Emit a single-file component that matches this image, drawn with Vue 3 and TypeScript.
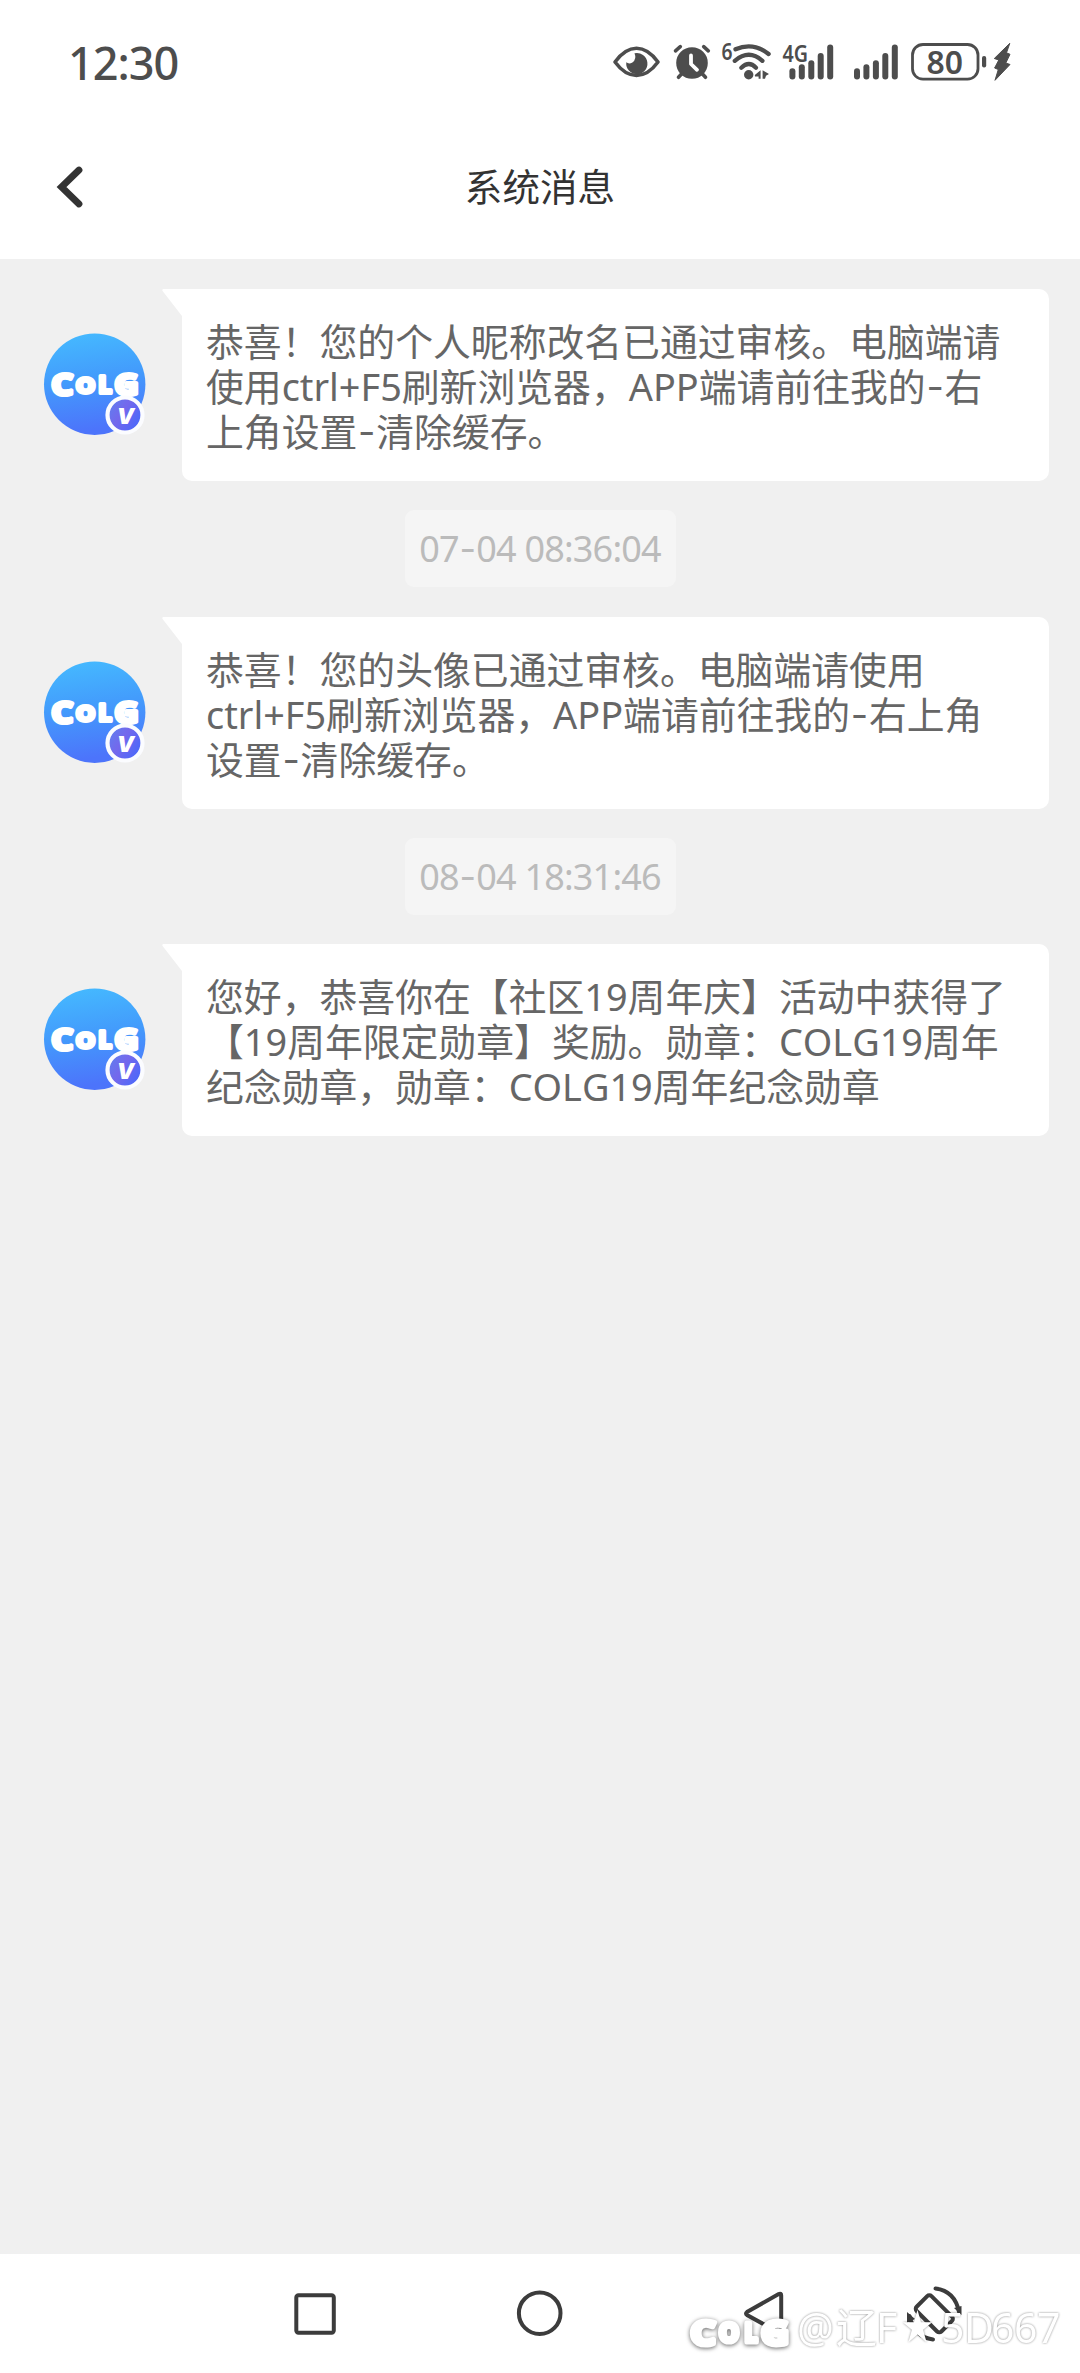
<script setup lang="ts">
interface Segment {
  text: string
  kind: 'cjk' | 'latin' | 'dash'
}
interface Message {
  lines: string[]
  time?: string
}

const messages: Message[] = [
  {
    lines: [
      '恭喜！您的个人昵称改名已通过审核。电脑端请',
      '使用ctrl+F5刷新浏览器，APP端请前往我的-右',
      '上角设置-清除缓存。',
    ],
    time: '07-04 08:36:04',
  },
  {
    lines: [
      '恭喜！您的头像已通过审核。电脑端请使用',
      'ctrl+F5刷新浏览器，APP端请前往我的-右上角',
      '设置-清除缓存。',
    ],
    time: '08-04 18:31:46',
  },
  {
    lines: [
      '您好，恭喜你在【社区19周年庆】活动中获得了',
      '【19周年限定勋章】奖励。勋章：COLG19周年',
      '纪念勋章，勋章：COLG19周年纪念勋章',
    ],
  },
]

function split(line: string): Segment[] {
  const parts = line.match(/-|[\x20-\x2c\x2e-\x7e]+|[^\x20-\x7e]+/g) ?? []
  return parts.map((text) => ({
    text,
    kind: text === '-' ? 'dash' : /^[\x20-\x7e]/.test(text) ? 'latin' : 'cjk',
  }))
}

const bars = [
  { dx: 0, top: 68.3 },
  { dx: 9.4, top: 64.3 },
  { dx: 18.9, top: 60.3 },
  { dx: 28.3, top: 53 },
  { dx: 37.8, top: 44.4 },
]

const mark = [
  { ch: '@', x: 797 },
  { ch: '辽', x: 836 },
  { ch: 'F', x: 876 },
  { ch: '5', x: 941 },
  { ch: 'D', x: 964 },
  { ch: '6', x: 991 },
  { ch: '6', x: 1014 },
  { ch: '7', x: 1037 },
]
</script>

<template>
  <div class="screen">
    <header class="status">
      <span class="clock">12:30</span>
      <div class="status-icons">
        <svg width="55" height="52" viewBox="610 36 55 52">
          <path d="M615 62C622 52.5 629 48.3 636.5 48.3S651 52.5 658 62C651 71.500 644 75.400 636.500 75.400S622 71.500 615 62Z" fill="none" stroke="#4d4d4d" stroke-width="3.6" stroke-linejoin="round" />
          <path d="M634.500 53.200A10.600 10.600 0 1 1 626.300 62.300Q629 64.400 632.400 62.400Q637 59 634.500 53.200Z" fill="#4d4d4d" />
        </svg>
        <svg width="51" height="52" viewBox="665 36 51 52">
          <circle cx="692" cy="63" r="15.800" fill="#4d4d4d" />
          <path d="M675.500 50.800L680.300 46.700M703.700 46.700L708.300 50.800M682 73.500L678.500 77.300M702 73.500L705.500 77.300" stroke="#4d4d4d" stroke-width="3.600" stroke-linecap="round" />
          <path d="M691 55.500V64L697 69.800" fill="none" stroke="#fff" stroke-width="3.800" stroke-linecap="round" stroke-linejoin="round" />
        </svg>
        <svg width="62" height="52" viewBox="716 36 62 52">
          <text x="721.500" y="60" class="glyph" font-size="23" textLength="11" lengthAdjust="spacingAndGlyphs">6</text>
          <g fill="none" stroke="#4d4d4d" stroke-width="4.300" stroke-linecap="round">
            <path d="M735.500 49.300Q753 41.500 768.600 54" />
            <path d="M734.800 60.800Q749 48.800 762.400 60.800" />
            <path d="M741.300 67.700Q749 60.400 756 67.700" />
          </g>
          <circle cx="748.700" cy="74.700" r="4.700" fill="#4d4d4d" />
          <path d="M754.800 75L760.600 70.200V78.800H758.600V76.400H755ZM762.600 70.200L769 74L766 75.800L765 78.800H762.600Z" fill="#4d4d4d" />
        </svg>
        <svg width="67" height="52" viewBox="778 36 67 52">
          <rect v-for="b in bars" :key="b.dx" :x="789.4 + b.dx" :y="b.top" width="6" :height="79.4 - b.top" rx="3" fill="#4d4d4d" />
          <text x="782.500" y="61.500" class="glyph halo" font-size="23" textLength="25.500" lengthAdjust="spacingAndGlyphs">4G</text>
        </svg>
        <svg width="60" height="52" viewBox="845 36 60 52">
          <rect v-for="b in bars" :key="b.dx" :x="854 + b.dx" :y="b.top" width="6" :height="79.4 - b.top" rx="3" fill="#4d4d4d" />
        </svg>
        <svg width="85" height="52" viewBox="905 36 85 52">
          <rect x="912.500" y="44.500" width="65.500" height="34.700" rx="10.500" fill="none" stroke="#4d4d4d" stroke-width="2.800" />
          <rect x="982" y="56" width="4.200" height="11.500" rx="2" fill="#4d4d4d" />
          <text x="926.500" y="73.700" class="glyph" font-size="32.500" textLength="36.500" lengthAdjust="spacingAndGlyphs">80</text>
        </svg>
        <svg width="24" height="52" viewBox="990 36 24 52">
          <path d="M1009.800 43.300L994.300 58.500L998.800 60L994.600 68L998.300 69.500L995 80.300L1010 64.500L1005.800 63L1010 54.300L1006.500 52.800Z" fill="#4d4d4d" stroke="#4d4d4d" stroke-width="1" stroke-linejoin="round" />
        </svg>
      </div>
    </header>

    <div class="titlebar">
      <svg class="back" width="40" height="56" viewBox="50 159 40 56">
        <path d="M79 170L61.500 187L79 204" fill="none" stroke="#333" stroke-width="6.800" stroke-linecap="round" />
      </svg>
      <h1>系统消息</h1>
    </div>

    <main class="chat">
      <template v-for="(m, i) in messages" :key="i">
        <section class="row">
          <svg class="avatar" width="112" height="112" viewBox="40 330 112 112">
            <defs>
              <linearGradient :id="'disc' + i" x1="0" y1="0" x2="0.150" y2="1">
                <stop offset="0" stop-color="#45bcff" />
                <stop offset="0.500" stop-color="#439bfc" />
                <stop offset="1" stop-color="#4c74fb" />
              </linearGradient>
              <linearGradient :id="'vip' + i" x1="0" y1="0" x2="1" y2="0.600">
                <stop offset="0" stop-color="#5b83f0" />
                <stop offset="0.500" stop-color="#7468ec" />
                <stop offset="1" stop-color="#4b68fa" />
              </linearGradient>
            </defs>
            <circle cx="94.700" cy="384.200" r="50.700" :fill="'url(#disc' + i + ')'" />
            <g class="logo">
              <text x="51.500" y="395" font-size="29" textLength="21.500" lengthAdjust="spacingAndGlyphs">C</text>
              <text x="76" y="392.500" font-size="22" textLength="19" lengthAdjust="spacingAndGlyphs">O</text>
              <text x="98.500" y="392.500" font-size="23" textLength="13" lengthAdjust="spacingAndGlyphs">L</text>
              <text x="114.500" y="395" font-size="29" textLength="24" lengthAdjust="spacingAndGlyphs">G</text>
            </g>
            <circle cx="125" cy="415" r="17.500" :fill="'url(#vip' + i + ')'" stroke="#fbfcff" stroke-width="4.200" />
            <text class="vip" x="125.500" y="424" font-size="22" text-anchor="middle">V</text>
          </svg>
          <div class="bubble">
            <svg class="tail" width="22" height="30" viewBox="0 0 22 30">
              <path d="M1.500 0H22V30L20 27L0.600 2Q-0.200 0 1.500 0Z" fill="#fff" />
            </svg>
            <p v-for="line in m.lines" :key="line">
              <span v-for="(s, k) in split(line)" :key="k" :class="s.kind">{{ s.text }}</span>
            </p>
          </div>
        </section>
        <div v-if="m.time" class="time">
          <span v-for="(s, k) in split(m.time)" :key="k" :class="s.kind">{{ s.text }}</span>
        </div>
      </template>
    </main>

    <nav class="navbar">
      <svg width="60" height="60" viewBox="285 2284 60 60">
        <rect x="296.300" y="2295.200" width="37.500" height="37.500" rx="2.200" fill="none" stroke="#3c3c3c" stroke-width="4" />
      </svg>
      <svg width="60" height="60" viewBox="510 2284 60 60">
        <circle cx="539.700" cy="2313.200" r="20.800" fill="none" stroke="#3c3c3c" stroke-width="4" />
      </svg>
      <svg width="60" height="60" viewBox="735 2284 60 60">
        <path d="M781.200 2295.500V2331Q781.200 2334 778.700 2332.500L747 2315Q745 2313.500 747 2312L778.700 2294Q781.200 2292.800 781.200 2295.500Z" fill="none" stroke="#3c3c3c" stroke-width="4" />
      </svg>
      <svg class="rotate" width="60" height="60" viewBox="905 2284 60 60">
        <rect x="-10.500" y="-17.500" width="21" height="35" rx="3" transform="translate(934.300 2313.800) rotate(-45)" fill="none" stroke="#3c3c3c" stroke-width="4" />
        <path d="M935.500 2288.500Q955 2291 959 2312M933 2339.500Q914 2337 909.500 2316" fill="none" stroke="#3c3c3c" stroke-width="4" stroke-linecap="round" />
        <path d="M954 2308L961.500 2306V2315ZM907 2312V2323L915 2319Z" fill="#3c3c3c" />
      </svg>
      <svg class="mark" width="400" height="60" viewBox="680 2300 400 60">
        <g class="mark-logo">
          <text x="690.500" y="2345" font-size="34" textLength="25" lengthAdjust="spacingAndGlyphs">C</text>
          <text x="719" y="2341.500" font-size="26" textLength="20" lengthAdjust="spacingAndGlyphs">O</text>
          <text x="744.500" y="2341.500" font-size="27" textLength="13" lengthAdjust="spacingAndGlyphs">L</text>
          <text x="761" y="2345" font-size="34" textLength="28" lengthAdjust="spacingAndGlyphs">G</text>
        </g>
        <g class="mark-name">
          <text v-for="g in mark" :key="g.x" :x="g.x" y="2342.800">{{ g.ch }}</text>
          <text x="902" y="2340" font-size="36" textLength="31" lengthAdjust="spacingAndGlyphs">★</text>
        </g>
      </svg>
    </nav>
  </div>
</template>

<style>
body {
  background: #fff;
}
</style>

<style scoped>
.screen {
  width: 1080px;
  height: 2373px;
  display: flex;
  flex-direction: column;
  background: #fff;
  overflow: hidden;
  font-family: 'Noto Sans', 'Noto Sans CJK SC', sans-serif;
}
svg {
  display: block;
  flex: none;
}
.status {
  height: 124px;
  box-sizing: border-box;
  padding: 36px 66px 0 68px;
  display: flex;
  justify-content: space-between;
  flex: none;
}
.clock {
  font-size: 45px;
  line-height: 54px;
  font-weight: 500;
  letter-spacing: -1px;
  color: #4d4d4d;
}
.status-icons {
  display: flex;
}
.glyph {
  font-family: 'Noto Sans', sans-serif;
  font-weight: 600;
  fill: #4d4d4d;
}
.halo {
  stroke: #fff;
  stroke-width: 3px;
  paint-order: stroke;
}
.titlebar {
  height: 135px;
  flex: none;
  display: grid;
  grid-template-columns: 90px 1fr 90px;
  align-items: center;
}
.back {
  justify-self: end;
  margin-bottom: 9px;
}
h1 {
  margin: 0 0 9px;
  text-align: center;
  font-size: 37.6px;
  line-height: 54px;
  font-weight: 400;
  color: #333;
}
.chat {
  flex: 1;
  background: #f0f0f0;
  padding-top: 30px;
}
.row {
  display: flex;
  padding-left: 40px;
}
.avatar {
  margin-top: 41px;
}
.bubble {
  position: relative;
  box-sizing: border-box;
  width: 867px;
  height: 192px;
  margin-left: 30px;
  padding: 30px 0 0 24px;
  background: #fff;
  border-radius: 0 10px 10px 10px;
}
.tail {
  position: absolute;
  left: -20px;
  top: 0;
}
p {
  margin: 0;
  font-size: 37.85px;
  line-height: 45px;
  height: 45px;
  color: #666;
  white-space: nowrap;
  font-kerning: none;
  display: flex;
}
.dash {
  display: inline-block;
  width: 18.9px;
  text-align: center;
  font-family: Inter, sans-serif;
}
.time {
  width: 271px;
  height: 77px;
  margin: 29px auto 29.5px;
  border-radius: 9px;
  background: #f5f5f5;
  color: #bbb;
  font-size: 36px;
  line-height: 78px;
  letter-spacing: -0.8px;
  display: flex;
  justify-content: center;
  white-space: pre;
}
.time .dash {
  width: 17.5px;
}
.navbar {
  position: relative;
  height: 119px;
  flex: none;
  box-sizing: border-box;
  padding: 30px 0 0 285px;
  display: flex;
  gap: 165px;
  background: #fff;
}
.rotate {
  margin-left: -55px;
}
.logo text {
  font-family: 'Noto Sans', sans-serif;
  font-weight: 700;
  fill: #fff;
  stroke: #fff;
  stroke-width: 4px;
  stroke-linejoin: round;
}
.vip {
  font-family: Inter, sans-serif;
  font-weight: 900;
  font-style: italic;
  fill: #fff;
}
.mark {
  position: absolute;
  right: 0;
  top: 46px;
}
.mark-logo {
  filter: drop-shadow(0 1px 2px rgba(0, 0, 0, 0.6));
}
.mark-logo text {
  font-family: 'Noto Sans', sans-serif;
  font-weight: 700;
  fill: #fff;
  stroke: #fff;
  stroke-width: 5px;
  stroke-linejoin: round;
}
.mark-name {
  font-size: 41px;
  filter: drop-shadow(0 0 1.2px rgba(0, 0, 0, 0.45));
}
.mark-name text {
  font-family: 'Noto Sans', 'Noto Sans CJK SC', 'DejaVu Sans', sans-serif;
  fill: #fff;
}
</style>
